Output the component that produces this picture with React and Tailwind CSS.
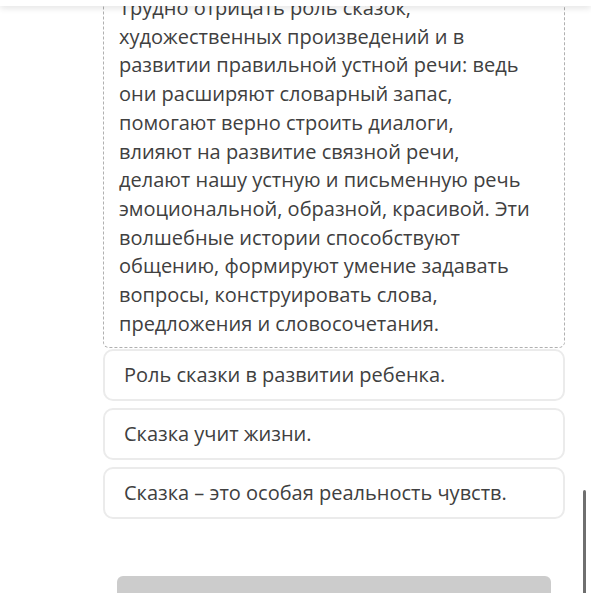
const passage = [
  'Трудно отрицать роль сказок,',
  'художественных произведений и в',
  'развитии правильной устной речи: ведь',
  'они расширяют словарный запас,',
  'помогают верно строить диалоги,',
  'влияют на развитие связной речи,',
  'делают нашу устную и письменную речь',
  'эмоциональной, образной, красивой. Эти',
  'волшебные истории способствуют',
  'общению, формируют умение задавать',
  'вопросы, конструировать слова,',
  'предложения и словосочетания.',
];

const options = [
  'Роль сказки в развитии ребенка.',
  'Сказка учит жизни.',
  'Сказка – это особая реальность чувств.',
];

export default function App() {
  return (
    <div className="relative w-[591px] h-[593px] overflow-hidden bg-white font-['Open_Sans',sans-serif] text-[#404040]">
      {/* верхняя панель */}
      <div className="absolute top-0 left-0 right-0 z-10 h-[6px] bg-white shadow-[0_2px_6px_rgba(0,0,0,0.12)]" />

      <div className="flex flex-col pl-[103px] pr-[26px] -mt-[16px]">
        <div className="border border-dashed border-[#b0b0b0] border-t-0 rounded-b-md pl-[15px] pt-[10px] pb-[9px] text-[20px] leading-[28.7px]">
          {passage.map((line, i) => (
            <div key={i} className="whitespace-nowrap">{line}</div>
          ))}
        </div>

        <div className="flex flex-col gap-[7px] mt-[1px]">
          {options.map((text, i) => (
            <div
              key={i}
              className="h-[52px] flex items-center pl-[19px] border-2 border-[#ebebeb] rounded-[10px] text-[20px]"
            >
              {text}
            </div>
          ))}
        </div>

        <div className="mt-[57px] ml-[14px] mr-[14px] h-[40px] bg-[#cccccc] rounded-md" />
      </div>

      {/* полоса прокрутки */}
      <div className="absolute left-[583px] top-[490px] w-[3px] h-[110px] bg-[#6f6f6f] rounded-t-sm" />
    </div>
  );
}
